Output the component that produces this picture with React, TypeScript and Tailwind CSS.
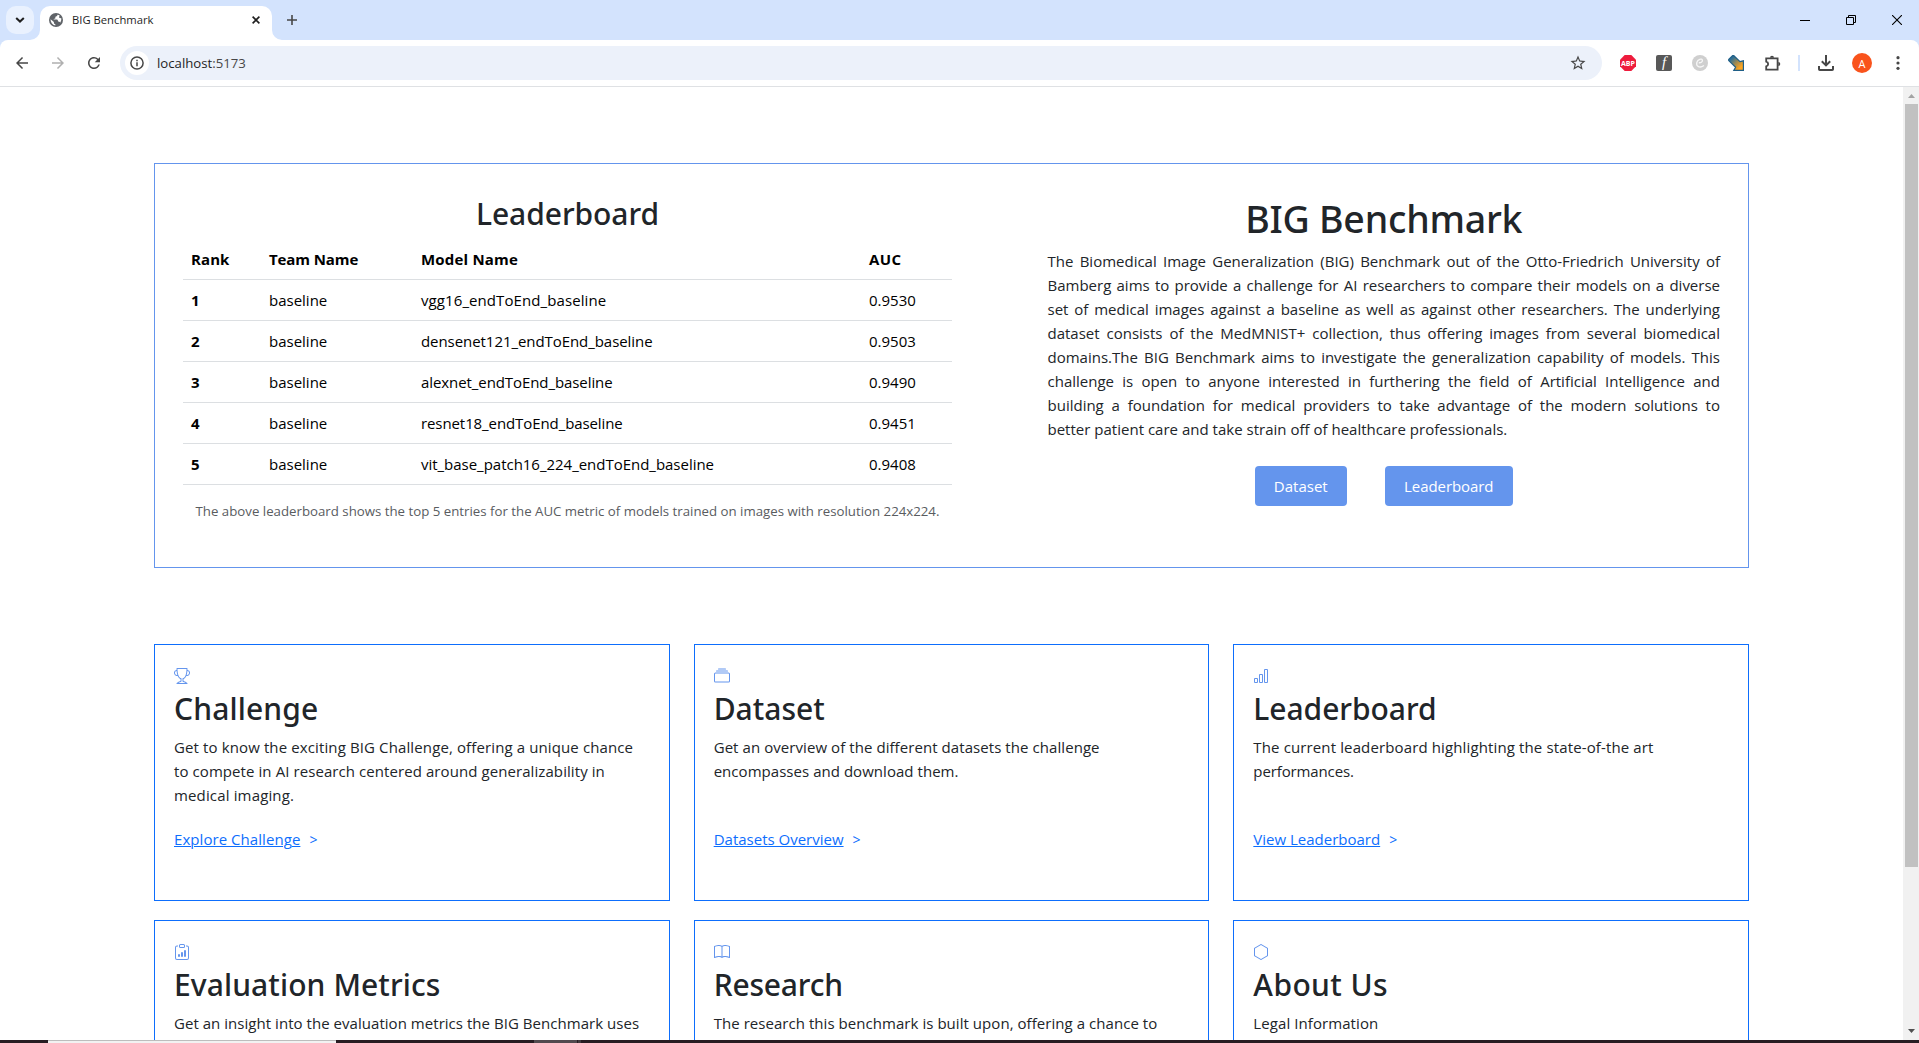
import type { ReactNode } from "react";
import { BsBarChart, BsBook, BsClipboardData, BsCollection, BsHexagon, BsTrophy } from "react-icons/bs";
import { MdArrowBack, MdArrowForward, MdRefresh, MdStarBorder } from "react-icons/md";

const rows = [
  { model: "vgg16_endToEnd_baseline", auc: "0.9530", track: "tracking-[0.09px]" },
  { model: "densenet121_endToEnd_baseline", auc: "0.9503", track: "tracking-[-0.06px]" },
  { model: "alexnet_endToEnd_baseline", auc: "0.9490", track: "tracking-[-0.08px]" },
  { model: "resnet18_endToEnd_baseline", auc: "0.9451", track: "tracking-[-0.09px]" },
  { model: "vit_base_patch16_224_endToEnd_baseline", auc: "0.9408", track: "tracking-[-0.02px]" },
];

const intro = [
  "The Biomedical Image Generalization (BIG) Benchmark out of the Otto-Friedrich University of",
  "Bamberg aims to provide a challenge for AI researchers to compare their models on a diverse",
  "set of medical images against a baseline as well as against other researchers. The underlying",
  "dataset consists of the MedMNIST+ collection, thus offering images from several biomedical",
  "domains.The BIG Benchmark aims to investigate the generalization capability of models. This",
  "challenge is open to anyone interested in furthering the field of Artificial Intelligence and",
  "building a foundation for medical providers to take advantage of the modern solutions to",
];

type CardData = {
  icon: ReactNode;
  title: string;
  titleTrack: string;
  lines: [string, string][];
  link?: string;
  linkTrack?: string;
};

const cards: CardData[] = [
  {
    icon: <BsTrophy />,
    title: "Challenge",
    titleTrack: "tracking-[0.15px]",
    lines: [
      ["Get to know the exciting BIG Challenge, offering a unique chance", "tracking-[0.12px]"],
      ["to compete in AI research centered around generalizability in", "tracking-[0.08px]"],
      ["medical imaging.", "tracking-[0.15px]"],
    ],
    link: "Explore Challenge",
    linkTrack: "tracking-[0.06px]",
  },
  {
    icon: <BsCollection />,
    title: "Dataset",
    titleTrack: "",
    lines: [
      ["Get an overview of the different datasets the challenge", "tracking-[0.07px]"],
      ["encompasses and download them.", "tracking-[0.04px]"],
    ],
    link: "Datasets Overview",
    linkTrack: "",
  },
  {
    icon: <BsBarChart />,
    title: "Leaderboard",
    titleTrack: "tracking-[-0.05px]",
    lines: [
      ["The current leaderboard highlighting the state-of-the art", "tracking-[0.13px]"],
      ["performances.", "tracking-[-0.12px]"],
    ],
    link: "View Leaderboard",
    linkTrack: "",
  },
  {
    icon: <BsClipboardData />,
    title: "Evaluation Metrics",
    titleTrack: "tracking-[0.1px]",
    lines: [["Get an insight into the evaluation metrics the BIG Benchmark uses", "tracking-[0.04px]"]],
  },
  {
    icon: <BsBook />,
    title: "Research",
    titleTrack: "tracking-[-0.2px]",
    lines: [["The research this benchmark is built upon, offering a chance to", "tracking-[0.05px]"]],
  },
  {
    icon: <BsHexagon />,
    title: "About Us",
    titleTrack: "tracking-[0.4px]",
    lines: [["Legal Information", "tracking-[0.08px]"]],
  },
];

function Slot({ children }: { children: ReactNode }) {
  return <div className="flex w-9 items-center justify-center">{children}</div>;
}

function TabStrip() {
  return (
    <div className="flex h-10 bg-[#d3e3fd] pl-1.5 pt-1.5">
      <div className="flex size-7 items-center justify-center rounded-[10px] bg-[#e9f1fe]">
        <svg width="10" height="6" viewBox="0 0 10 6" fill="none" stroke="#1f1f1f" strokeWidth="2">
          <path d="M1.2 1 5 4.6 8.8 1" />
        </svg>
      </div>
      <svg className="-ml-1 mt-6" width="10" height="10" viewBox="0 0 10 10" fill="#fff">
        <path d="M10 0v10H0A10 10 0 0 0 10 0z" />
      </svg>
      <div className="flex h-[34px] w-[232px] items-center rounded-t-[10px] bg-white pb-[6px] pl-[9px] pr-[12px]">
        <svg width="14" height="14" viewBox="0 0 14 14">
          <circle cx="7" cy="7" r="7" fill="#5f6368" />
          <path
            d="M8.3 1.7c.2 1-.3 1.6-1.4 1.9-.6.2-.6.8-.5 1.4.1.5-.4.8-1.1.8-.5 0-.7.3-.6.8h2.8c1 0 1.5.7 1.5 1.5 0 .5.4.7 1 .7.8 0 1.200.3 1.300.9a5.600 5.600 0 0 0 .9-4.700c-.8.3-1.700.2-2-.5-.3-.6.1-1.200.6-1.700a5 5 0 0 0-2.500-1.100z"
            fill="#fff"
          />
          <path d="M1.600 6.300a5.500 5.500 0 0 0 4.700 6.100v-1.300c-.8 0-1.400-.6-1.400-1.300v-.7L1.600 6.300z" fill="#fff" />
        </svg>
        <span className="ml-[9px] text-[11.25px] leading-4 text-[#1f1f1f]">BIG Benchmark</span>
        <svg className="ml-auto" width="8" height="8" viewBox="0 0 8 8" stroke="#1f1f1f" strokeWidth="1.600">
          <path d="M.6.6l6.800 6.800M7.400.6L.6 7.400" />
        </svg>
      </div>
      <svg className="mt-6" width="10" height="10" viewBox="0 0 10 10" fill="#fff">
        <path d="M0 0v10h10A10 10 0 0 1 0 0z" />
      </svg>
      <svg className="ml-[5px] mt-[9px]" width="10" height="10" viewBox="0 0 10 10" stroke="#474747" strokeWidth="1.600">
        <path d="M5 0v10M0 5h10" />
      </svg>
      <div className="ml-auto mt-[9px] flex gap-9 pr-[17px]">
        <svg width="10" height="10" viewBox="0 0 10 10" fill="#000">
          <path d="M0 5h10v1H0z" />
        </svg>
        <svg width="10" height="10" viewBox="0 0 10 10" fill="none" stroke="#000">
          <path d="M.5 2.500h7v7h-7zM2.500 2.500v-2h7v7h-2" />
        </svg>
        <svg width="10" height="10" viewBox="0 0 10 10" stroke="#000" strokeWidth="1.100">
          <path d="M0 0l10 10M10 0L0 10" />
        </svg>
      </div>
    </div>
  );
}

function Toolbar() {
  return (
    <div className="bg-[#d3e3fd]">
      <div className="flex h-[47px] items-center rounded-t-[8px] border-b border-[#dfe1e4] bg-white pl-1 text-[#474747]">
        <Slot><MdArrowBack size={18} /></Slot>
        <Slot><MdArrowForward size={18} className="text-[#b0b0b0]" /></Slot>
        <Slot><MdRefresh size={18} /></Slot>
        <div className="ml-2 flex h-[34px] w-[1482px] items-center rounded-full bg-[#ecf1fa] pl-[5px] pr-[15px]">
          <div className="flex size-6 items-center justify-center rounded-full bg-white">
            <svg width="14" height="14" viewBox="0 0 14 14" fill="none" stroke="#474747" strokeWidth="1.500">
              <circle cx="7" cy="7" r="6.100" />
              <path d="M7 6.200v4M7 3.700v1.500" />
            </svg>
          </div>
          <span className="ml-2 text-[13.2px] leading-5 text-[#474747]">
            <span className="text-[#1f1f1f]">localhost</span>:5173
          </span>
          <MdStarBorder size={18} className="ml-auto" />
        </div>
        <div className="ml-2 flex">
          <Slot>
            <svg width="16" height="16" viewBox="0 0 16 16">
              <path d="M4.700 0h6.600L16 4.700v6.600L11.300 16H4.700L0 11.300V4.700z" fill="#ee1c3d" />
              <text x="1" y="10.900" fontSize="7.800" fontWeight="700" fill="#fff" textLength="14" lengthAdjust="spacingAndGlyphs">ABP</text>
            </svg>
          </Slot>
          <Slot>
            <div className="flex size-4 items-center justify-center rounded-[2px] bg-[#585858] pb-px font-['Liberation_Serif',serif] text-[15px] italic leading-none text-white">
              f
            </div>
          </Slot>
          <Slot>
            <svg width="16" height="16" viewBox="0 0 16 16" fill="none">
              <circle cx="8" cy="8" r="8" fill="#cfcfcf" />
              <path d="M6.800 7.600c1.800.6 4-.9 3.600-2.500C9.900 3.300 5.800 4 4.800 7.500c-1 4 3 6 7.200 3" stroke="#f6f6f6" strokeWidth="1.300" />
            </svg>
          </Slot>
          <Slot>
            <svg width="16" height="16" viewBox="0 0 16 16">
              <defs>
                <linearGradient id="shaft" x1="0" y1="0" x2="1" y2="1">
                  <stop offset="0.2" stopColor="#2d6f96" />
                  <stop offset="0.5" stopColor="#a08a50" />
                  <stop offset="0.8" stopColor="#ffa51e" />
                </linearGradient>
              </defs>
              <path d="M.7 4.400 4.600.7h1.200L12 6.600l3.400-.8v9.600H5.800l1.800-3.200L.7 5.600z" fill="url(#shaft)" stroke="#1f5f87" strokeWidth="1.200" />
            </svg>
          </Slot>
          <Slot>
            <svg width="17" height="17" viewBox="0 0 17 17" fill="none" stroke="#474747" strokeWidth="1.800">
              <path d="M2.200 3.400h11.400v11.200H2.200v-3.200c2.600-.6 2.600-4.200 0-4.800z" />
              <path d="M6 2.700a2 2 0 0 1 4 0zM14.300 7a2 2 0 0 1 0 4z" fill="#474747" stroke="none" />
            </svg>
          </Slot>
          <div className="flex w-[18px] items-center justify-center">
            <div className="h-4 w-0.5 bg-[#d3e3fd]" />
          </div>
          <Slot>
            <svg width="16" height="16" viewBox="0 0 16 16" fill="none" stroke="#474747" strokeWidth="2">
              <path d="M8 0v10M3.800 6.200 8 10.400l4.200-4.200M1 11v3.200c0 .5.300.8.8.8h12.400c.5 0 .8-.3.800-.8V11" />
            </svg>
          </Slot>
          <Slot>
            <div className="flex size-5 items-center justify-center rounded-full bg-[#f9531c] text-[11px] leading-none text-white">A</div>
          </Slot>
          <Slot>
            <svg width="4" height="14" viewBox="0 0 4 14" fill="#474747">
              <circle cx="2" cy="1.700" r="1.600" />
              <circle cx="2" cy="7" r="1.600" />
              <circle cx="2" cy="12.300" r="1.600" />
            </svg>
          </Slot>
        </div>
      </div>
    </div>
  );
}

function Leaderboard() {
  return (
    <div className="w-[769px]">
      <h2 className="pt-px text-center font-['Noto_Sans',sans-serif] text-[30px] font-medium leading-[38px] tracking-[-0.05px]">Leaderboard</h2>
      <table className="mt-[6px] w-full table-fixed border-separate border-spacing-0 text-left text-black">
        <colgroup>
          <col className="w-[78px]" />
          <col className="w-[152px]" />
          <col className="w-[448px]" />
          <col />
        </colgroup>
        <thead>
          <tr className="[&>th]:border-b [&>th]:border-[#dcdfe2] [&>th]:p-2">
            <th className="tracking-[0.1px]">Rank</th>
            <th className="tracking-[-0.1px]">Team Name</th>
            <th className="tracking-[0.2px]">Model Name</th>
            <th className="tracking-[0.4px]">AUC</th>
          </tr>
        </thead>
        <tbody>
          {rows.map((row, i) => (
            <tr key={row.model} className="[&>*]:border-b [&>*]:border-[#dcdfe2] [&>*]:p-2">
              <th>{i + 1}</th>
              <td>baseline</td>
              <td className={row.track}>{row.model}</td>
              <td>{row.auc}</td>
            </tr>
          ))}
        </tbody>
      </table>
      <p className="mt-4 whitespace-nowrap text-center text-[13.25px] leading-[21px] text-[#595c5f]">
        The above leaderboard shows the top 5 entries for the AUC metric of models trained on images with resolution 224x224.
      </p>
    </div>
  );
}

function Intro() {
  return (
    <div className="w-[672.5px]">
      <h1 className="pt-px text-center font-['Noto_Sans',sans-serif] text-[37.5px] font-medium leading-[48px] tracking-[-0.22px]">BIG Benchmark</h1>
      <div className="mt-[6px] whitespace-nowrap">
        {intro.map((line) => (
          <p key={line} className="[text-align-last:justify]">{line}</p>
        ))}
        <p className="tracking-[0.01px]">better patient care and take strain off of healthcare professionals.</p>
      </div>
      <div className="mt-[25px] flex justify-center gap-[38px] text-white">
        <button className="h-10 w-[92px] rounded-[4px] bg-[#6495ed]">Dataset</button>
        <button className="h-10 w-32 rounded-[4px] bg-[#6495ed] tracking-[-0.08px]">Leaderboard</button>
      </div>
    </div>
  );
}

function Card({ card }: { card: CardData }) {
  return (
    <div className="h-[257px] border border-[#0d6efd] px-[19px] pt-[23px]">
      <div className="h-[22px] text-base text-[#6495ed]">{card.icon}</div>
      <h2 className={`font-['Noto_Sans',sans-serif] text-[30px] font-medium leading-[38px] ${card.titleTrack}`}>{card.title}</h2>
      <div className="mt-[7px] h-[72px] whitespace-nowrap">
        {card.lines.map(([text, track]) => (
          <p key={text} className={track}>{text}</p>
        ))}
      </div>
      {card.link && (
        <div className="mt-5 text-[#0d6efd]">
          <a className={`underline decoration-1 underline-offset-1 ${card.linkTrack}`}>{card.link}</a>
          <span className="ml-[9px] text-sm">&gt;</span>
        </div>
      )}
    </div>
  );
}

export default function App() {
  return (
    <div className="flex h-[1043px] w-[1919px] flex-col overflow-hidden bg-white font-['Open_Sans',sans-serif] text-[15px] leading-6 text-[#212529]">
      <TabStrip />
      <Toolbar />
      <div className="flex h-[953px]">
        <main className="w-[1903px] overflow-hidden px-[154px] pt-[76px]">
          <section className="flex h-[405px] justify-between border border-[#6495ed] px-7 pt-[30px]">
            <Leaderboard />
            <Intro />
          </section>
          <section className="mt-[76px] grid grid-cols-3 gap-x-6 gap-y-[19px]">
            {cards.map((card) => (
              <Card key={card.title} card={card} />
            ))}
          </section>
        </main>
        <div className="flex w-4 flex-col items-center bg-[#f1f1f1]">
          <svg className="mt-[7px]" width="7" height="4" viewBox="0 0 7 4" fill="#a3a3a3">
            <path d="M0 4 3.500 0 7 4z" />
          </svg>
          <div className="mt-[6px] h-[763px] w-[13px] bg-[#c1c1c1]" />
          <svg className="mb-[7px] mt-auto" width="7" height="4" viewBox="0 0 7 4" fill="#505050">
            <path d="M0 0h7L3.500 4z" />
          </svg>
        </div>
      </div>
      <div className="flex h-[3px] bg-[#271c22]">
        <div className="ml-12 w-[288px] border-t border-[#bdbdbd] bg-[#f2f2f2]" />
        <div className="ml-[198px] w-[43px] bg-[#524a4f]" />
        <div className="ml-px w-[3px] bg-[#423a3f]" />
      </div>
    </div>
  );
}
